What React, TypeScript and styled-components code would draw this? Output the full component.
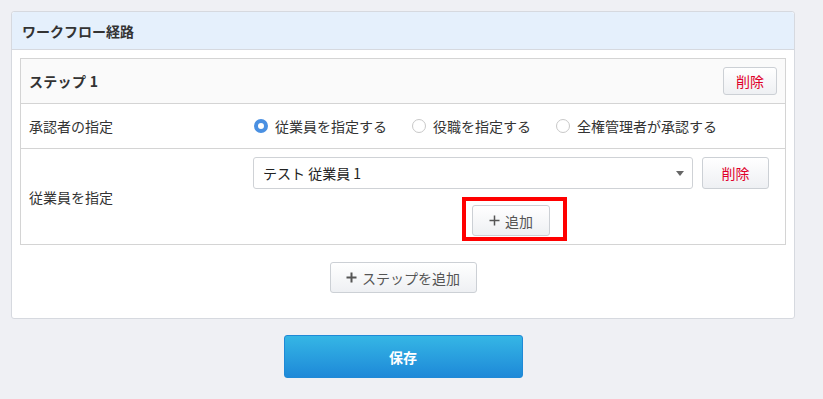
import styled, { createGlobalStyle } from 'styled-components';

const GlobalStyle = createGlobalStyle`
  body {
    margin: 0;
    background: #eff0f4;
    font-family: "Noto Sans CJK JP", "Noto Sans", sans-serif;
    color: #333;
    font-size: 14px;
  }
`;

const Page = styled.div`
  padding: 11px 28px 0 11px;
  display: flex;
  flex-direction: column;
  align-items: stretch;
  width: 784px;
`;

const Panel = styled.section`
  background: #fff;
  border: 1px solid #d6d9df;
  border-radius: 3px;
`;

const PanelHeader = styled.div`
  height: 37px;
  display: flex;
  align-items: center;
  padding: 0 10px;
  background: #e5f0fc;
  border-bottom: 1px solid #d6d9df;
  border-radius: 3px 3px 0 0;
  font-weight: bold;
  font-size: 14px;
`;

const PanelBody = styled.div`
  padding: 8px 8px 25px;
  display: flex;
  flex-direction: column;
  align-items: center;
`;

const StepBox = styled.div`
  align-self: stretch;
  border: 1px solid #d4d4d4;
`;

const StepHeader = styled.div`
  height: 44px;
  display: flex;
  align-items: center;
  justify-content: space-between;
  padding: 0 8px;
  background: #fafafa;
  border-bottom: 1px solid #d4d4d4;
  font-weight: bold;
  font-size: 14px;
  letter-spacing: 0.3px;
`;

const Row = styled.div<{ $last?: boolean }>`
  display: flex;
  align-items: center;
  padding: 0 8px;
  min-height: 44px;
  border-bottom: ${({ $last }) => ($last ? 'none' : '1px solid #d4d4d4')};
`;

const Label = styled.div`
  width: 224px;
  flex-shrink: 0;
`;

const RadioGroup = styled.div`
  display: flex;
  align-items: center;
  gap: 24px;
`;

const RadioItem = styled.label`
  display: flex;
  align-items: center;
  gap: 7px;
`;

const RadioCircle = styled.span<{ $checked?: boolean }>`
  width: 14px;
  height: 14px;
  box-sizing: border-box;
  border-radius: 50%;
  background: #fff;
  border: ${({ $checked }) => ($checked ? '4px solid #4a90e2' : '1px solid #c8c8c8')};
  margin-left: 1px;
`;

const EmployeeField = styled.div`
  width: 516px;
  display: flex;
  flex-direction: column;
  align-items: center;
  gap: 16px;
  padding: 8px 0 8px;
`;

const SelectLine = styled.div`
  display: flex;
  gap: 9px;
  align-self: stretch;
`;

const SelectBox = styled.div`
  width: 440px;
  height: 32px;
  box-sizing: border-box;
  border: 1px solid #cfd2d6;
  border-radius: 3px;
  display: flex;
  align-items: center;
  justify-content: space-between;
  padding: 0 8px 0 9px;
  color: #222;
  font-size: 14px;
`;

const Caret = styled.span`
  width: 0;
  height: 0;
  border-left: 4px solid transparent;
  border-right: 4px solid transparent;
  border-top: 5px solid #666;
`;

const Button = styled.button<{ $danger?: boolean; $w?: number; $h?: number }>`
  width: ${({ $w }) => $w}px;
  height: ${({ $h }) => $h}px;
  box-sizing: border-box;
  border: 1px solid #ccd0d5;
  border-radius: 3px;
  background: linear-gradient(#ffffff, #eef0f3);
  font-family: inherit;
  font-size: 14px;
  color: ${({ $danger }) => ($danger ? '#e0002a' : '#555')};
  display: flex;
  align-items: center;
  justify-content: center;
  gap: 5px;
  padding: 0;
  cursor: pointer;
`;

const PlusIcon = ({ bold }: { bold?: boolean }) => (
  <svg width="11" height="11" viewBox="0 0 11 11">
    <path d="M5.5 0.5v10M0.5 5.5h10" stroke="#555" strokeWidth={bold ? 2 : 1.5} fill="none" />
  </svg>
);

const Highlight = styled.div`
  position: relative;
`;

const HighlightFrame = styled.div`
  position: absolute;
  left: -10px;
  top: -8px;
  right: -17px;
  bottom: -5px;
  border: 4px solid #ff0000;
  pointer-events: none;
`;

const StepAddWrap = styled.div`
  margin-top: 17px;
`;

const SaveButton = styled.button`
  align-self: center;
  margin: 16px 0 0;
  width: 239px;
  height: 43px;
  border: 1px solid #1f89d6;
  border-radius: 3px;
  background: linear-gradient(#35b6e5, #1e89d8);
  color: #fff;
  font-family: inherit;
  font-size: 14px;
  font-weight: bold;
  cursor: pointer;
`;

export default function App() {
  return (
    <>
      <GlobalStyle />
      <Page>
        <Panel>
          <PanelHeader>ワークフロー経路</PanelHeader>
          <PanelBody>
            <StepBox>
              <StepHeader>
                <span>ステップ 1</span>
                <Button $danger $w={54} $h={28}>削除</Button>
              </StepHeader>
              <Row>
                <Label>承認者の指定</Label>
                <RadioGroup>
                  <RadioItem>
                    <RadioCircle $checked />
                    従業員を指定する
                  </RadioItem>
                  <RadioItem>
                    <RadioCircle />
                    役職を指定する
                  </RadioItem>
                  <RadioItem>
                    <RadioCircle />
                    全権管理者が承認する
                  </RadioItem>
                </RadioGroup>
              </Row>
              <Row $last>
                <Label>従業員を指定</Label>
                <EmployeeField>
                  <SelectLine>
                    <SelectBox>
                      <span>テスト 従業員 1</span>
                      <Caret />
                    </SelectBox>
                    <Button $danger $w={67} $h={32}>削除</Button>
                  </SelectLine>
                  <Highlight>
                    <Button $w={78} $h={31}><PlusIcon />追加</Button>
                    <HighlightFrame />
                  </Highlight>
                </EmployeeField>
              </Row>
            </StepBox>
            <StepAddWrap>
              <Button $w={147} $h={31}><PlusIcon bold />ステップを追加</Button>
            </StepAddWrap>
          </PanelBody>
        </Panel>
        <SaveButton>保存</SaveButton>
      </Page>
    </>
  );
}
